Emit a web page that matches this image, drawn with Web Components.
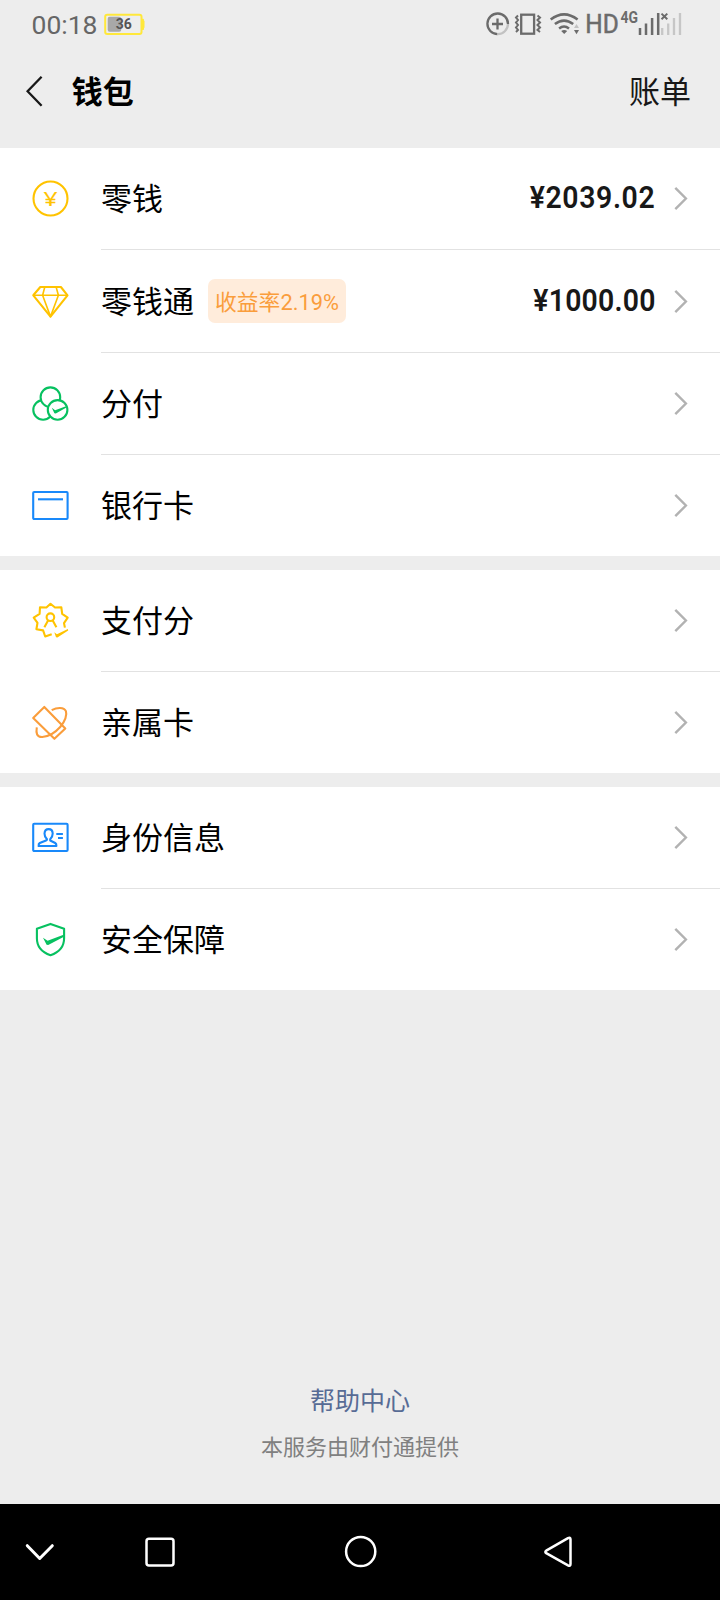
<!DOCTYPE html>
<html lang="zh-CN">
<head>
<meta charset="utf-8">
<title>钱包</title>
<style>
html,body{margin:0;padding:0;background:#ededed}
body{font-family:Roboto,"Noto Sans CJK SC",sans-serif;width:720px;height:1600px;overflow:hidden}
</style>
</head>
<body>
<wallet-page>
  <status-bar slot="status" time="00:18" battery="36"></status-bar>
  <nav-header slot="header">钱包<span slot="action">账单</span></nav-header>
  <cell-group>
    <wallet-cell icon="coin" amount="¥2039.02">零钱</wallet-cell>
    <wallet-cell icon="diamond" amount="¥1000.00" class="tall">零钱通<rate-tag slot="tag">收益率2.19%</rate-tag></wallet-cell>
    <wallet-cell icon="fenfu">分付</wallet-cell>
    <wallet-cell icon="card" last>银行卡</wallet-cell>
  </cell-group>
  <cell-group>
    <wallet-cell icon="score">支付分</wallet-cell>
    <wallet-cell icon="family" last>亲属卡</wallet-cell>
  </cell-group>
  <cell-group>
    <wallet-cell icon="identity">身份信息</wallet-cell>
    <wallet-cell icon="shield" last>安全保障</wallet-cell>
  </cell-group>
  <page-footer slot="footer">帮助中心<span slot="note">本服务由财付通提供</span></page-footer>
  <system-nav slot="nav"></system-nav>
</wallet-page>

<script>
const define = (name, html) => customElements.define(name, class extends HTMLElement {
  constructor() {
    super();
    const t = document.createElement('template');
    t.innerHTML = typeof html === 'function' ? html(this) : html;
    this.attachShadow({mode: 'open'}).append(t.content.cloneNode(true));
  }
});

const ICONS = {
  coin: `<g stroke="#ffc300"><circle cx="20.5" cy="20.5" r="17"/></g><text transform="translate(20.500 28) scale(1.200 1)" x="0" y="0" text-anchor="middle" font-family="Noto Sans" font-size="20.500" font-weight="400" fill="#ffc300" stroke="#ffc300" stroke-width=".2">¥</text>`,
  diamond: `<g stroke="#ffc300" stroke-width="2.1"><path d="M10.3 6h20.6l6.6 8.3L20.5 35.6 3.3 14.3z"/><path d="M3.3 14.3h34.2M14.8 6l-2.2 8.3 7.9 21.3 7.9-21.3L26.1 6" stroke-width="1.6"/></g>`,
  fenfu: `<g stroke="#07c160" stroke-width="2.1"><circle cx="13.1" cy="26.9" r="9.8"/><circle cx="20.4" cy="14.2" r="9.8" fill="#fff"/><circle cx="27.6" cy="26.9" r="9.8" fill="#fff"/></g><path d="M21.8 24.8l3.3 2.4 10.9-4v1.6l-10.2 5.6-1.4-.2z" fill="#07c160"/>`,
  card: `<g stroke="#1989fa"><rect x="3.2" y="7" width="34.4" height="27" rx="1"/><path d="M8 14.3h25"/></g>`,
  score: `<g stroke="#ffc300" stroke-width="2.1"><path d="M21.7 34.3l-6.5 2.2-2.1-6.1-6.700-1.200 1.100-6.400-3.800-5.200 5.900-3.700.4-6.600 6.400.2 4.100-3.700 4.500 3.700 6.300-.3.9 6.700 5.500 3.800-3.700 5.400.9 4.500"/><circle cx="20.4" cy="17.2" r="3.800"/><path d="M18.200 20.300L14.400 27.200M22.600 20.300l3.800 6.900"/></g><path d="M24.300 32.300l2.600 1.900 11-5.200.3 1.600-10.800 6.800-1.400-.2z" fill="#ffc300"/>`,
  family: `<g stroke="#fa9d3b"><path d="M14.3 4.900L35.300 26.400 24.400 36.800 3.200 16z"/><path d="M21.7 8.100C27 5.300 34 4.800 35.900 9.200 37.300 13 35.100 19.500 30.200 25 25 30.800 18.500 34.600 12.300 35 6.800 35.200 5.800 31.300 6.800 25.400"/></g>`,
  identity: `<g stroke="#1989fa"><rect x="3.2" y="6.8" width="34.4" height="27.2" rx="1"/><path d="M26.3 17h6.6M28 21h4.9"/><path d="M17 22.2c-2-2-2.6-3.4-2.5-5.7.2-2.9 2.100-4.400 4.100-4.400s4 1.500 4.100 4.400c0 2.300-.5 3.700-2.500 5.700v1.300l5 2.500c1 .6 1.300 1.400 1.200 3H8.600c-.2-1.600.2-2.400 1.200-3l6.200-2.500c1-.4 1.100-.8 1-1.300z"/></g>`,
  shield: `<g stroke="#07c160"><path d="M20.5 4.900l13.600 4.900v9.400c0 8.200-5.400 14.200-13.600 17-8.200-2.800-13.600-8.800-13.600-17V9.800z"/></g><path d="M13 18.7l4.600 3 17.3-6.400v1.900L18.200 26l-1.600-.3z" fill="#07c160"/>`
};

define('status-bar', el => `
<style>
:host{display:flex;height:48px;color:#666;align-items:center}
.time{margin-left:31.500px;width:72.500px;font-size:26.500px;line-height:48px;padding-top:1px}
svg{display:block}
.sys{margin-left:340.500px;display:flex;height:48px}
</style>
<div class="time">${el.getAttribute('time')}</div>
<svg width="41" height="48" viewBox="0 0 41 48"><rect x="1.2" y="14.7" width="36.3" height="19.4" rx="2" fill="none" stroke="#ffe83b" stroke-width="2"/><path d="M38 19.300h1.500v1.500H40v7h-.5V29.500H38z" fill="#ffe83b" stroke="#ffe83b"/><rect x="3.700" y="16.800" width="13.500" height="15" rx="2" fill="#a8a8a8"/><text x="19.800" y="29" text-anchor="middle" font-family="Roboto" font-size="14" font-weight="700" fill="#555">${el.getAttribute('battery')}</text></svg>
<svg class="sys" width="200" height="48" viewBox="486 0 200 48" fill="none" stroke="#6b6b6b" stroke-width="2.300">
<path d="M508 24a10.300 10.300 0 1 0-10.500 10.100"/><path d="M497.500 34.100A10.300 10.300 0 0 0 508 24" stroke="#c2c2c2"/><path d="M497.500 18.500v11M492 24h11"/>
<rect x="521.200" y="14.700" width="12.900" height="19"/>
<path d="M518 15.500l-2 2 2 2.500-2 2.500 2 2.500-2 2.500 2 2.500-2 2M537.500 15.500l2.500 2-2.500 2.500 2.500 2.500-2.500 2.500 2.500 2.500-2.500 2.500 2.500 2" stroke-width="2"/>
<path d="M550.700 19.600q13.300-10.500 26.900 0M554.900 24.100q9.100-7 18.300 0M559.100 28.400q4.900-3.700 9.900 0" stroke-width="2.500"/><path d="M561.200 31q3-2 6 0l-3 3z" fill="#6b6b6b" stroke="none"/>
<path d="M574 28l2.500-4 2.500 4z" fill="#c2c2c2" stroke="none"/><path d="M574 30h5l-2.500 4.300z" fill="#6b6b6b" stroke="none"/>
<text x="585.200" y="33.200" font-family="Roboto" font-size="25" textLength="33.500" lengthAdjust="spacingAndGlyphs" fill="#6b6b6b" stroke="#6b6b6b" stroke-width=".5">HD</text>
<text x="620.500" y="22.600" font-family="Roboto" font-weight="700" font-size="16.500" textLength="17.500" lengthAdjust="spacingAndGlyphs" fill="#6b6b6b" stroke="none">4G</text>
<path d="M640 28v7M646 23.500V35M652.100 18v17M658.200 13v22" stroke-width="2.500"/>
<path d="M662.200 28v7M668.200 23.500V35M674 18v17M680 13v22" stroke="#c6c6c6" stroke-width="2.300"/>
<path d="M661.500 13.600l5.800 5.600M667.300 13.600l-5.800 5.600" stroke-width="2"/>
</svg>`);

define('nav-header', `
<style>
:host{display:flex;height:86px;padding:0 29px 14px 26px;align-items:center;color:#000;font-size:31px}
svg{display:block;flex:none}
h1{margin:0 auto 0 20.800px;padding-top:4px;font-size:31px;font-weight:700;line-height:44px}
.action{color:#181818;line-height:44px;padding-top:4px}
</style>
<svg width="25" height="40" viewBox="0 0 25 40"><path d="M15.600 5.700L1.600 20.200l14 14.500" fill="none" stroke="#181818" stroke-width="2.300"/></svg>
<h1><slot></slot></h1><div class="action"><slot name="action"></slot></div>`);

define('rate-tag', `
<style>
:host{display:flex;height:44px;box-sizing:border-box;align-items:center;padding:0 7px 1px 7px;border-radius:7px;background:#ffecdb;color:#fa9d3b;font-size:21.800px;white-space:nowrap}
</style><slot></slot>`);

define('wallet-cell', el => {
  const tall = el.classList.contains('tall');
  const last = el.hasAttribute('last');
  const amt = el.getAttribute('amount');
  return `
<style>
:host{display:flex;height:${tall ? 103 : last ? 101 : 102}px;background:#fff;color:#000}
.icon{display:block;width:41px;height:41px;margin:${tall ? 31 : 30}px 30px 0 30px;flex:none}
.body{flex:1;display:flex;align-items:center;box-sizing:border-box;padding-right:32.500px;${last ? '' : 'border-bottom:1px solid #e2e2e2;'}}
.label{font-size:31px;line-height:44px;padding-top:${tall ? 3 : 2}px;white-space:nowrap}
.tag{margin-left:14px}
.amount{margin-left:auto;color:#181818;font-weight:600;font-size:31.500px;line-height:40px;padding-bottom:${tall ? 0 : 1}px;letter-spacing:${tall ? .25 : .7}px;transform:scaleX(.902);transform-origin:100% 50%;white-space:nowrap}
.arrow{display:block;flex:none;margin-left:${amt ? (tall ? 17.2 : 17) : 0}px}
</style>
<svg class="icon" viewBox="0 0 41 41" fill="none" stroke-width="2.100" stroke-linejoin="round">${ICONS[el.getAttribute('icon')]}</svg>
<div class="body"><div class="label"><slot></slot></div><div class="tag"><slot name="tag"></slot></div>
<div class="amount">${amt || ''}</div>
<svg class="arrow" width="15" height="25" viewBox="0 0 15 25"><path d="M2.300 1.800l10.600 10.700L2.300 23.200" fill="none" stroke="#b2b2b2" stroke-width="2.400"/></svg></div>`;
});

define('cell-group', `<style>:host{display:block;background:#fff}</style><slot></slot>`);

define('page-footer', `
<style>
:host{display:flex;flex-direction:column;align-items:center;color:#576b95;font-size:25px;line-height:36px}
.note{color:#808080;font-size:22px;line-height:32px;margin-top:12px}
</style><div><slot></slot></div><div class="note"><slot name="note"></slot></div>`);

define('system-nav', `
<style>
:host{display:flex;height:96px;background:#000;align-items:center}
svg{display:block;flex:none;fill:none;stroke:#fff;stroke-width:2.500;stroke-linejoin:round;stroke-linecap:round}
</style>
<svg width="80" height="96" viewBox="0 0 80 96"><path d="M27.300 41.700L39.700 54.500 52.300 41.700" stroke-width="3"/></svg>
<svg width="160" height="96" viewBox="80 0 160 96"><rect x="146.500" y="34.700" width="27" height="26.700" rx="2.500"/></svg>
<svg width="240" height="96" viewBox="240 0 240 96"><circle cx="360.700" cy="47.500" r="14.600"/></svg>
<svg width="160" height="96" viewBox="480 0 160 96"><path d="M546.200 46.700L568 34.200Q570.500 33 570.500 35.500V60Q570.500 62.500 568 61.300L546.200 49.200Q544.500 48 546.200 46.700z"/></svg>`);

define('wallet-page', `
<style>
:host{display:flex;flex-direction:column;width:720px;height:1600px;background:#ededed}
.groups{display:flex;flex-direction:column;gap:14px}
.footer{margin-top:auto;padding-bottom:40px}
</style>
<slot name="status"></slot><slot name="header"></slot>
<div class="groups"><slot></slot></div>
<div class="footer"><slot name="footer"></slot></div>
<slot name="nav"></slot>`);
</script>
</body>
</html>
